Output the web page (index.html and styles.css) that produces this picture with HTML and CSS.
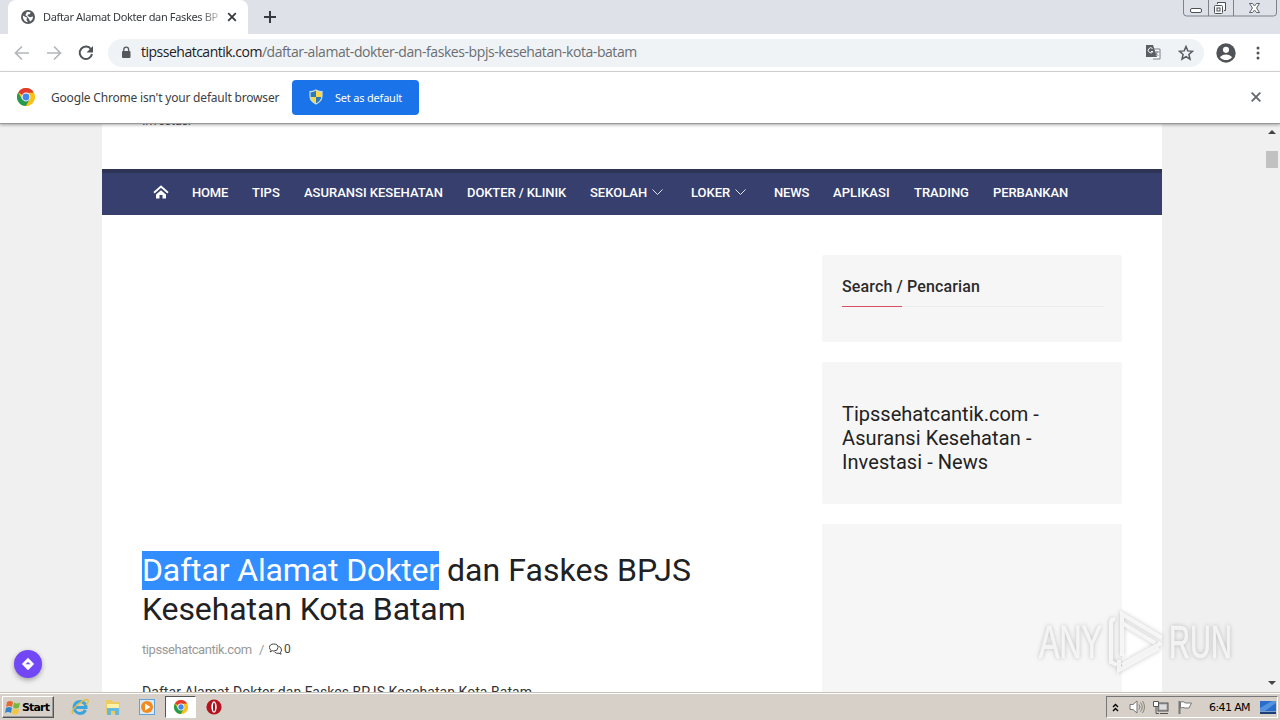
FILE: index.html
```html
<!DOCTYPE html>
<html lang="id">
<head>
<meta charset="utf-8">
<title>Daftar Alamat Dokter dan Faskes BPJS Kesehatan Kota Batam</title>
<link rel="stylesheet" href="styles.css">
</head>
<body>
<svg class="defs" width="0" height="0">
  <symbol id="chrome" viewBox="0 0 18 18">
    <circle cx="9" cy="9" r="9" fill="#fbc116"/>
    <path d="M9 9 1.2 4.5A9 9 0 0 1 16.8 4.5L9 5Z" fill="#e33b2e"/>
    <path d="M1.2 4.5A9 9 0 0 0 9 18l4-7-4 0-4 0Z" fill="#269b4f"/>
    <path d="M9 5h7.8A9 9 0 0 1 9 18l4-7Z" fill="#fbc116"/>
    <circle cx="9" cy="9" r="4.4" fill="#fff"/><circle cx="9" cy="9" r="3.4" fill="#4286ee"/>
  </symbol>
</svg>
<div class="tabstrip">
  <div class="tab">
    <svg class="globe" width="14" height="14" viewBox="0 0 14 14"><circle cx="7" cy="7" r="7" fill="#55595d"/><path d="M2 5.5 4.5 7l1.5.5L5.5 10 7 12.3C3.5 12 1.5 9 2 5.500M6 1.800 9.500 2.300 9 4 7 4.500 6.500 6 9 7.200l3-.7c0 2-1 4-3 5L8 9 6 6.500 4.300 5Z" fill="#fff"/></svg>
    <span class="tab-title">Daftar Alamat Dokter dan Faskes BP</span>
    <svg width="10" height="10" viewBox="0 0 10 10"><path d="m1.200 1.200 7.600 7.600m0-7.600L1.200 8.800" stroke="#36393d" stroke-width="1.800"/></svg>
  </div>
  <svg class="newtab" width="12" height="12" viewBox="0 0 12 12"><path d="M6 0v12M0 6h12" stroke="#36393d" stroke-width="2"/></svg>
  <svg class="wincontrols" width="94" height="18" viewBox="0 0 94 18" fill="none" stroke="#7d828b">
    <path d="M.5 0v13q0 3 3 3h87q3 0 3-3V0M25.500 0v16M50.500 0v16"/>
    <g stroke="#4b4f57"><rect x="7.500" y="8.500" width="11" height="4" rx="1.500" fill="#fff"/><path d="M34.500 4V2.500h8v8H41" fill="#fff"/><rect x="31.500" y="5.500" width="8" height="8" rx="1" fill="#fff"/><rect x="34" y="8" width="3" height="3"/><path d="M66.500 3.500h3l2 2.500 2-2.500h3L73.500 8l3 4.500h-3l-2-2.500-2 2.500h-3l3-4.500Z" fill="#fff" stroke-width=".9"/></g>
  </svg>
</div>
<div class="toolbar">
  <div class="navbuttons">
    <svg width="16" height="16" viewBox="0 0 16 16" fill="none" stroke="#b4b6b9" stroke-width="1.700"><path d="M15 8H2M8 1.500 1.500 8 8 14.500"/></svg>
    <svg width="16" height="16" viewBox="0 0 16 16" fill="none" stroke="#b4b6b9" stroke-width="1.700"><path d="M1 8h13M8 1.500 14.500 8 8 14.500"/></svg>
    <svg width="16" height="16" viewBox="0 0 16 16"><path d="M13 4.200A6.200 6.200 0 1 0 14 9" fill="none" stroke="#505458" stroke-width="2"/><path d="M15 1v6.500H8.500Z" fill="#505458"/></svg>
  </div>
  <div class="omnibox">
    <svg width="10" height="13" viewBox="0 0 10 13"><rect x="1" y="5" width="8.500" height="7" rx="1" fill="#55595d"/><path d="M2.800 6V3.500a2.400 2.400 0 0 1 4.800 0V6" fill="none" stroke="#55595d" stroke-width="1.300"/></svg>
    <span class="url"><b class="host">tipssehatcantik.com</b><span class="path">/daftar-alamat-dokter-dan-faskes-bpjs-kesehatan-kota-batam</span></span>
    <svg class="translate" width="15" height="15" viewBox="0 0 15 15"><path d="M5 4h9v10H7" fill="#fff" stroke="#7b7f84"/><path d="M0 0h7l4 12H0Z" fill="#5b5f64"/><path d="M6.500 3.500a2.500 2.500 0 1 0 .5 3H5" fill="none" stroke="#fff"/><path d="M8.500 7h5M11 6v1.500Q11 10 8.500 11M9.500 8l3 3" fill="none" stroke="#777b80" stroke-width=".9"/></svg>
    <svg class="star" width="16" height="16" viewBox="0 0 16 16"><path d="m8 1.500 1.800 4.400 4.700.4-3.600 3.100 1.100 4.700L8 11.600l-4 2.500 1.100-4.700-3.600-3.100 4.700-.4Z" fill="none" stroke="#575b60" stroke-width="1.500"/></svg>
  </div>
  <svg class="avatar" width="20" height="20" viewBox="0 0 19 19"><circle cx="9.500" cy="9.500" r="9.200" fill="#505458"/><circle cx="9.500" cy="6.500" r="2.900" fill="#fff"/><path d="M3.700 13.200q5.800-4.500 11.600 0-2.200 3-5.800 3t-5.800-3" fill="#fff"/></svg>
  <svg class="dots" width="4" height="14" viewBox="0 0 4 14" fill="#505458"><circle cx="2" cy="2" r="1.500"/><circle cx="2" cy="7" r="1.500"/><circle cx="2" cy="12" r="1.500"/></svg>
</div>
<div class="infobar">
  <svg width="18" height="18"><use href="#chrome"/></svg>
  <span class="info-text">Google Chrome isn't your default browser</span>
  <div class="set-default">
    <svg width="14" height="16" viewBox="0 0 14 16"><path d="M7 1q3 2 6 1.500V7q0 5-6 8-6-3-6-8V2.500Q4 3 7 1Z" fill="#f9d84a"/><path d="M7 1Q4 3 1 2.500V8h6ZM7 8h6q-.5 4.500-6 7Z" fill="#2d79b9"/><path d="M7 1q3 2 6 1.500V7q0 5-6 8-6-3-6-8V2.500Q4 3 7 1Z" fill="none" stroke="#c9dce0" stroke-width="1.200"/></svg>
    <span>Set as default</span>
  </div>
  <svg class="info-close" width="10" height="10" viewBox="0 0 10 10"><path d="m.7.7 8.600 8.600m0-8.600L.7 9.300" stroke="#63676b" stroke-width="1.800"/></svg>
</div>
<div class="viewport">
  <div class="page">
    <div class="header"><span>Investasi</span></div>
    <div class="menu">
      <svg class="home" width="16" height="14" viewBox="0 0 16 14"><path d="M1 7.800 8 1.500l7 6.300" fill="none" stroke="#fff" stroke-width="1.900"/><path d="M3 9.500 8 5.200l5 4.300v4H9.500V10h-3v3.500H3Z" fill="#fff"/></svg>
      <span class="m-home">HOME</span><span class="m-tips">TIPS</span><span class="m-asuransi">ASURANSI KESEHATAN</span><span class="m-dokter">DOKTER / KLINIK</span>
      <span class="m-sekolah">SEKOLAH <svg width="11" height="7" viewBox="0 0 11 7"><path d="m.5.500 5 5 5-5" fill="none" stroke="#dfe2f1"/></svg></span>
      <span class="m-loker">LOKER <svg width="11" height="7" viewBox="0 0 11 7"><path d="m.5.500 5 5 5-5" fill="none" stroke="#dfe2f1"/></svg></span>
      <span class="m-news">NEWS</span><span class="m-aplikasi">APLIKASI</span><span class="m-trading">TRADING</span><span class="m-perbankan">PERBANKAN</span>
    </div>
    <div class="columns">
      <div class="article">
        <h1><span class="selected">Daftar Alamat Dokter</span> <span class="title-rest">dan Faskes BPJS</span><br><span class="title-second">Kesehatan Kota Batam</span></h1>
        <div class="meta"><span class="author">tipssehatcantik.com</span><span class="slash">/</span><svg width="13" height="12" viewBox="0 0 13 12" fill="none" stroke="#444"><path d="M2 7.500Q.5 6 .5 4.500.500 1 4.800 1T9 4.500 4.800 8q-1 0-1.500-.3L1 9Zm7.500-4.300Q12.500 4 12.500 7q0 1.200-1 2.200l.5 2-2-1Q7.500 11 5.500 9"/></svg><span class="count">0</span></div>
        <p class="lead">Daftar Alamat Dokter dan Faskes BPJS Kesehatan Kota Batam</p>
      </div>
      <div class="sidebar">
        <div class="card search"><h2>Search / Pencarian</h2><div class="rule"><i></i></div></div>
        <div class="card about"><div class="l1">Tipssehatcantik.com -</div><div class="l2">Asuransi Kesehatan -</div><div class="l3">Investasi - News</div></div>
        <div class="card last"></div>
      </div>
    </div>
  </div>
  <div class="scrollbar"><i class="up"></i><i class="thumb"></i><i class="down"></i></div>
  <div class="bubble"><svg width="14" height="14" viewBox="0 0 14 14"><path d="m7 .8 6.200 6.200L7 13.200.8 7Z" fill="#fff"/><path d="M4.500 7.300 7 5l2.500 2.300Z" fill="#7247f5"/></svg></div>
  <div class="watermark">
    <svg width="202" height="70" viewBox="0 0 202 70">
      <g class="mark-letters"><text x="4" y="52" textLength="63" lengthAdjust="spacingAndGlyphs">ANY</text><text x="134" y="52" textLength="63" lengthAdjust="spacingAndGlyphs">RUN</text></g>
      <path class="mark-shape" d="M80 13q-4 0-4 4v39l6 3M87 50V8l40 24M87 17l33 20M126 37 87 59M84 54v10l40-22"/>
    </svg>
  </div>
</div>
<div class="taskbar">
  <div class="start"><svg width="16" height="15" viewBox="0 0 16 15"><path d="M2 2q3-2 6 0L7 7Q4 5 1 7Z" fill="#e96830"/><path d="M9 2.500q3 2 6 0L14 7.500q-3 2-6 0Z" fill="#76b83d"/><path d="M1 8q3-2 6 0l-1 5q-3-2-6 0Z" fill="#3484c9"/><path d="M8 8.500q3 2 6 0l-1 5q-3 2-6 0Z" fill="#f5c635"/></svg><b>Start</b></div>
  <svg class="t-ie" width="18" height="18" viewBox="0 0 18 18" fill="none"><path d="M14.500 12A6 6 0 1 1 15 8.500v1H5" stroke="#3ca4dc" stroke-width="3"/><path d="M2 16Q-1 13 7 6.500T17 2q1 2-2 5" stroke="#e5bd43" stroke-width="1.400"/></svg>
  <svg class="t-folder" width="18" height="17" viewBox="0 0 18 17"><path d="M2 3V1h6l1 2h7v12H2Z" fill="#eccb62"/><path d="M3 5h12v4H3Z" fill="#fff2a8"/><path d="M3 16V9h12v7h-4v-4H7v4Z" fill="#67b8dd"/></svg>
  <svg class="t-media" width="16" height="16" viewBox="0 0 16 16"><rect x=".5" y=".5" width="15" height="15" fill="#d9eafa" stroke="#62a2d9"/><circle cx="8" cy="8" r="6" fill="#f28b1d"/><path d="m6 4.500 5.500 3.500L6 11.500Z" fill="#fff"/></svg>
  <div class="t-chrome"><svg width="14" height="14"><use href="#chrome"/></svg></div>
  <svg class="t-opera" width="16" height="16" viewBox="0 0 16 16"><circle cx="8" cy="8" r="7.600" fill="#b31520"/><ellipse cx="8" cy="8" rx="2.700" ry="5.700" fill="#fff"/><ellipse cx="8" cy="8" rx="1" ry="4.600" fill="#a20c16"/></svg>
  <div class="tray">
    <svg width="7" height="9" viewBox="0 0 7 9"><path d="m1 4 2.500-2.500L6 4M1 8l2.500-2.500L6 8" fill="none" stroke="#000" stroke-width="1.400"/></svg>
    <svg class="vol" width="16" height="14" viewBox="0 0 16 14"><path d="M1 4.500h3L8 1v12L4 9.500H1Z" fill="#fff" stroke="#777"/><path d="M10 4.500q2 2.500 0 5M11.500 2.500q3.500 4.500 0 9M13.500 1q4 6 0 12" fill="none" stroke="#85827c"/></svg>
    <svg class="net" width="16" height="15" viewBox="0 0 16 15"><rect x="5" y="3" width="10" height="8" fill="#aaa" stroke="#555"/><path d="M6.500 4.500h7v5h-7z" fill="#ddd"/><path d="M7 13.500h8" stroke="#555"/><path d="M.5 1.500h5v5h-5z" fill="#fff" stroke="#555"/><path d="M3 6.500v7h3" fill="none" stroke="#555"/></svg>
    <svg class="flag" width="16" height="15" viewBox="0 0 16 15"><path d="M2.500 1v13" stroke="#777" stroke-width="2"/><path d="M3.500 2q3-1 5 1h6l-2.500 5H8q-2-1-4.500 0Z" fill="#fff" stroke="#777"/></svg>
    <span class="clock">6:41 AM</span>
    <svg class="desk" width="16" height="13" viewBox="0 0 16 13"><rect width="16" height="10.500" fill="#286dcc"/><path d="m0 7 12-7h4v2L5 10H0Z" fill="#5292df"/><path d="M0 11h16v2H0Z" fill="#1b3e76"/></svg>
  </div>
</div>
</body>
</html>
```
FILE: styles.css
```css
* { box-sizing: border-box; }
body { margin: 0; width: 1280px; height: 720px; overflow: hidden; display: flex; flex-direction: column; font-family: Roboto, "Liberation Sans", sans-serif; background: #fff; }
svg { flex: none; display: block; }
span, b { white-space: nowrap; }
.defs { position: absolute; }
.tabstrip { height: 34px; flex: none; background: #dee1e7; display: flex; padding-left: 8px; }
.tab { width: 240px; height: 34px; background: #fff; border-radius: 8px 8px 0 0; display: flex; align-items: center; padding-left: 13px; }
.tab-title { width: 175px; margin: -1px 9px 0 8px; font: 11px "Noto Sans", sans-serif; letter-spacing: -.35px; color: #36393d; -webkit-mask-image: linear-gradient(90deg, #000 155px, transparent 185px); mask-image: linear-gradient(90deg, #000 155px, transparent 185px); }
.newtab { margin: 11px 0 0 16px; }
.wincontrols { margin: 0 3px 0 auto; }
.toolbar { height: 38px; flex: none; display: flex; align-items: center; padding: 0 20px 0 14px; border-bottom: 1px solid #d9dadc; background: #fff; }
.navbuttons { display: flex; gap: 16px; width: 94px; }
.omnibox { width: 1096px; height: 28px; border-radius: 14px; background: #f0f3f5; display: flex; align-items: center; padding: 0 10px 0 13px; }
.url { flex: 1; margin-left: 10px; font: 14px/20px "Open Sans", sans-serif; margin-top: -1px; }
.host { font-weight: 400; color: #202124; letter-spacing: -.5px; }
.path { color: #6a6e73; letter-spacing: -.43px; }
.star { margin-left: 17px; }
.avatar { margin-left: 12px; }
.dots { margin-left: auto; }
.infobar { height: 52px; flex: none; position: relative; z-index: 2; display: flex; align-items: center; padding: 0 19px 1px 17px; background: #fff; border-bottom: 1px solid #999; box-shadow: 0 1px 3px #0005; }
.info-text { width: 241px; margin-left: 16px; font: 12px "Noto Sans", sans-serif; letter-spacing: -.19px; color: #3c4043; }
.set-default { width: 127px; height: 35px; background: #1a73e8; border-radius: 4px; display: flex; align-items: center; padding-left: 17px; color: #fff; font: 11px "Noto Sans", sans-serif; }
.set-default span { margin-left: 12px; letter-spacing: -.2px; }
.info-close { margin-left: auto; }
.viewport { flex: 1; min-height: 0; overflow: hidden; position: relative; background: #f0f0f0; padding-left: 102px; }
.page { width: 1060px; height: 568px; background: #fff; }
.header { height: 45px; padding-left: 40px; font-size: 13px; line-height: 15px; letter-spacing: -.35px; color: #555; }
.header span { display: block; transform: translateY(-11px); }
.menu { height: 46px; border-top: 4px solid #2d3456; background: #363f6d; color: #fff; font-size: 13px; font-weight: 500; display: flex; align-items: center; padding: 0 0 4px 51px; gap: 24px; }
.menu > span { flex: none; display: flex; align-items: center; gap: 5px; }
.home { margin-right: -1px; }
.m-home { width: 36px; letter-spacing: -.2px; } .m-tips { width: 28px; } .m-asuransi { width: 139px; } .m-dokter { width: 99px; letter-spacing: -.1px; }
.m-sekolah { width: 77px; } .m-loker { width: 59px; } .m-news { width: 35px; letter-spacing: -.2px; } .m-aplikasi { width: 57px; letter-spacing: .1px; } .m-trading { width: 55px; } .m-perbankan { width: 75px; letter-spacing: -.1px; }
.columns { height: 477px; display: flex; justify-content: space-between; padding: 0 40px; overflow: hidden; }
.article { width: 640px; padding-top: 336px; }
h1 { margin: 0; font-size: 32px; font-weight: 400; line-height: 39px; color: #202124; white-space: nowrap; }
.selected { display: inline-block; width: 297px; height: 39px; color: #fff; background: #328eff; vertical-align: top; letter-spacing: -.14px; }
.title-rest { letter-spacing: .06px; }
.title-second { letter-spacing: -.1px; }
.meta { height: 16px; margin-top: 12px; display: flex; align-items: center; font-size: 13px; color: #999; }
.author { width: 110px; letter-spacing: -.42px; } .slash { width: 17px; padding-left: 7px; } .count { margin-left: 2px; color: #444; font-size: 12px; }
.lead { margin: 27px 0 0; font-size: 14px; line-height: 16px; letter-spacing: .055px; color: #333; white-space: nowrap; }
.sidebar { width: 300px; padding-top: 40px; display: flex; flex-direction: column; gap: 20px; }
.card { flex: none; background: #f6f6f6; border-radius: 2px; padding: 0 20px; }
.search { height: 87px; padding-top: 22px; }
h2 { margin: 0; font-size: 16px; line-height: 20px; font-weight: 500; letter-spacing: .13px; color: #2b2b2b; }
.rule { height: 1px; margin: 9px -2px 0 0; background: #ececec; }
.rule i { display: block; width: 60px; height: 1px; background: #d85062; }
.about { height: 142px; padding-top: 40px; font-size: 20px; line-height: 24px; color: #222; white-space: nowrap; }
.l2 { letter-spacing: .1px; } .l3 { letter-spacing: .06px; }
.last { height: 180px; }
.scrollbar { position: absolute; top: 0; right: 1px; width: 15px; height: 568px; display: flex; flex-direction: column; align-items: center; }
.scrollbar i { flex: none; }
.up { margin-top: 6px; border: 4px solid transparent; border-top: 0; border-bottom-color: #444; }
.thumb { width: 12px; height: 17px; margin-top: 17px; margin-left: 1px; background: #c1c1c1; }
.down { margin: auto 0 7px; border: 4px solid transparent; border-bottom: 0; border-top-color: #444; }
.bubble { position: absolute; left: 14px; bottom: 14px; width: 28px; height: 28px; border-radius: 50%; background: #7247f5; display: flex; align-items: center; justify-content: center; box-shadow: 0 2px 5px #0005; }
.watermark { position: absolute; left: 1035px; top: 482px; filter: drop-shadow(0 0 2px #0004); }
.mark-letters { font: 46px "Liberation Sans", sans-serif; fill: #fafafa; stroke: #fafafa; stroke-width: .7; opacity: .85; }
.mark-shape { fill: none; stroke: #fafafa; stroke-width: 4; opacity: .85; }
.taskbar { height: 28px; flex: none; display: flex; align-items: center; background: #d6d0c8; border-top: 1px solid #c5c1b9; box-shadow: inset 0 1px #fff; padding: 1px 2px 0 2px; position: relative; }
.start { width: 52px; height: 22px; display: flex; align-items: center; padding-left: 2px; gap: 1px; border: 1px solid; border-color: #fff #555 #555 #fff; box-shadow: inset -1px -1px #999; font: 11px "DejaVu Sans", sans-serif; }
.start b { font-size: 11px; letter-spacing: -.85px; }
.t-ie { margin-left: 17px; } .t-folder { margin-left: 15px; } .t-media { margin-left: 17px; }
.t-chrome { margin-left: 10px; width: 31px; height: 22px; background: #fff; border: 1px solid; border-color: #555 #fff #fff #555; display: flex; align-items: center; justify-content: center; }
.t-opera { margin-left: 10px; }
.tray { width: 172px; height: 22px; margin-left: auto; border: 1px solid; border-color: #777 #fff #fff #777; display: flex; align-items: center; padding-left: 5px; }
.vol { margin-left: 10px; } .net { margin-left: 8px; } .flag { margin-left: 8px; }
.clock { width: 43px; margin-left: 16px; font: 11px "DejaVu Sans", sans-serif; letter-spacing: -.6px; }
.desk { margin-left: 8px; }
```
